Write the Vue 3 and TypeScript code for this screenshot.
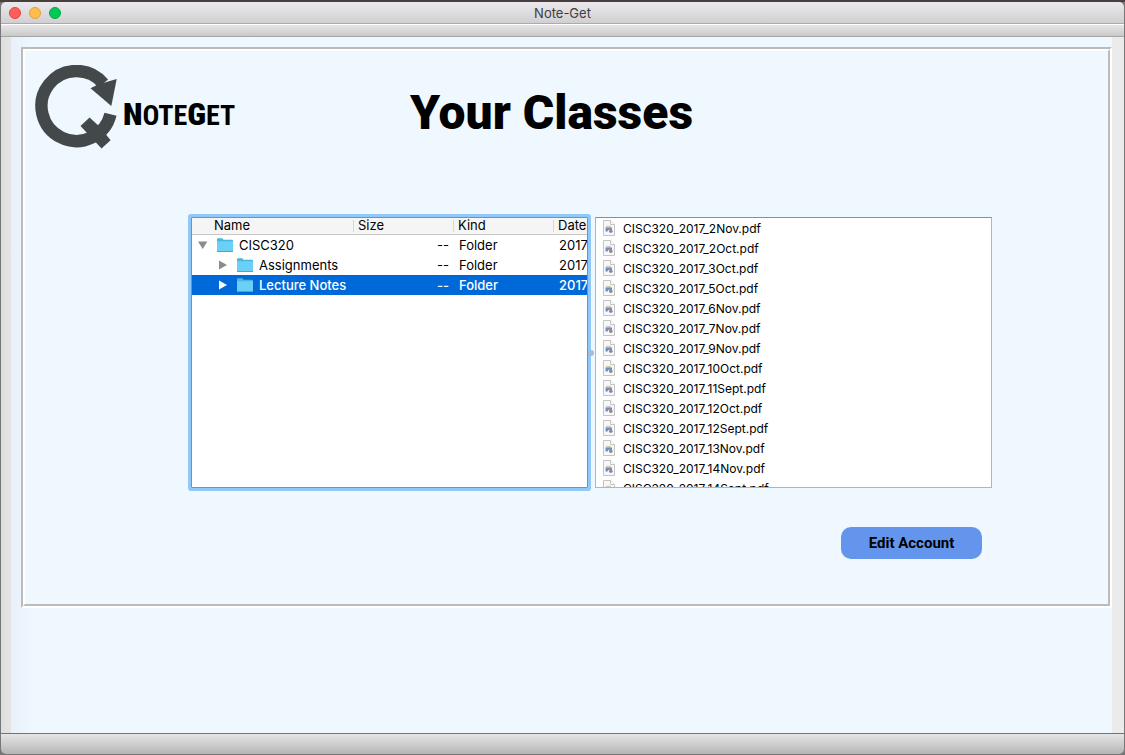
<script setup lang="ts">
import { ref } from 'vue'

interface Folder {
  name: string
  level: number
  open: boolean
  date: string
}

const folders = ref<Folder[]>([
  { name: 'CISC320', level: 0, open: true, date: '2017' },
  { name: 'Assignments', level: 1, open: false, date: '2017' },
  { name: 'Lecture Notes', level: 1, open: false, date: '2017' },
])
const selected = ref('Lecture Notes')

const days = [
  '2Nov', '2Oct', '3Oct', '5Oct', '6Nov', '7Nov', '9Nov', '10Oct',
  '11Sept', '12Oct', '12Sept', '13Nov', '14Nov', '14Sept',
]
const files = days.map((day) => `CISC320_2017_${day}.pdf`)
</script>

<template>
  <div class="window">
    <header class="titlebar">
      <div class="lights">
        <button class="light close" type="button" aria-label="Close"></button>
        <button class="light minimize" type="button" aria-label="Minimize"></button>
        <button class="light zoom" type="button" aria-label="Zoom"></button>
      </div>
      <span class="title">Note-Get</span>
    </header>
    <div class="toolbar"></div>

    <div class="body">
      <main class="page">
        <section class="frame">
          <div class="frame-inner">
            <div class="top">
              <div class="logo">
                <svg class="mark" width="83" height="85" viewBox="0 0 83 85" aria-hidden="true">
                  <path d="M 68.3 18.5 A 35 35 0 1 0 75.5 49.2" fill="none" stroke="#43484a" stroke-width="12.4" />
                  <path d="M 55.5 23.2 L 62 20 L 74 16.3 L 81.7 14 L 76.3 41 Z" fill="#43484a" />
                  <path d="M 45.5 61 L 54.5 52.5 L 65 62 L 75.6 75.3 L 66.5 83.6 Z" fill="#43484a" />
                </svg>
                <span class="wordmark"><b>N</b>OTE<b>G</b>ET</span>
              </div>
              <h1>Your Classes</h1>
            </div>

            <div class="panes">
              <div class="tree">
                <table>
                  <colgroup>
                    <col class="c-name" />
                    <col class="c-size" />
                    <col class="c-kind" />
                    <col />
                  </colgroup>
                  <thead>
                    <tr>
                      <th scope="col">Name</th>
                      <th scope="col">Size</th>
                      <th scope="col">Kind</th>
                      <th scope="col">Date</th>
                    </tr>
                  </thead>
                  <tbody>
                    <tr
                      v-for="f in folders"
                      :key="f.name"
                      :class="{ selected: f.name === selected }"
                      @click="selected = f.name"
                    >
                      <td>
                        <div class="entry" :class="{ nested: f.level > 0 }">
                          <button
                            class="twist"
                            type="button"
                            :aria-label="'Toggle ' + f.name"
                            :aria-expanded="f.open"
                          >
                            <svg width="10" height="10" viewBox="0 0 10 10">
                              <path :d="f.open ? 'M0 1.5H9.4L4.7 9Z' : 'M1 0.5V9.5L9 5Z'" fill="currentColor" />
                            </svg>
                          </button>
                          <svg width="16" height="14" viewBox="0 0 16 14" aria-hidden="true">
                            <path d="M0 1.2Q0 .3 .9 .3H5.2L6.6 1.8H15.1Q16 1.8 16 2.7V13.5H0Z" fill="#45b7e0" />
                            <path d="M0 3.2H16V13H0Z" fill="#6bcff6" />
                            <path d="M0 13H16V14H0Z" fill="#43a9d3" />
                          </svg>
                          <span>{{ f.name }}</span>
                        </div>
                      </td>
                      <td class="size">--</td>
                      <td>Folder</td>
                      <td>{{ f.date }}</td>
                    </tr>
                  </tbody>
                </table>
              </div>

              <span class="grip"></span>

              <ul class="files">
                <li v-for="file in files" :key="file">
                  <svg width="12" height="16" viewBox="0 0 12 16" aria-hidden="true">
                    <path d="M.5 .5H7.5L11.5 4.5V15.5H.5Z" fill="#f8f8f8" stroke="#c4c4c4" />
                    <path d="M7.5 .5V4.5H11.5" fill="#fff" stroke="#c4c4c4" />
                    <path d="M3 5.8H8V7.8H3Z" fill="#dccab2" />
                    <path d="M2.5 7.5H9V10H7L6 9.4L4.5 11.5H2.5Z" fill="#6d8fc8" />
                    <circle cx="7.8" cy="11.2" r="1.8" fill="#8f8a8a" />
                  </svg>
                  <span>{{ file }}</span>
                </li>
              </ul>
            </div>

            <div class="actions">
              <button class="edit" type="button">Edit Account</button>
            </div>
          </div>
        </section>
      </main>
    </div>

    <footer class="bottombar"></footer>
  </div>
</template>

<style>
body {
  background: #777;
}
</style>

<style scoped>
* {
  box-sizing: border-box;
}

.window {
  display: flex;
  flex-direction: column;
  min-height: 100vh;
  padding: 0 1px 1px;
  border-top: 2px solid #4a3f3f;
  background: #777;
  color: #000;
  font-family: Inter, "Liberation Sans", sans-serif;
  font-size: 13px;
}

.titlebar {
  display: grid;
  grid-template-columns: 1fr auto 1fr;
  align-items: center;
  height: 22px;
  border-bottom: 1px solid #acaaac;
  border-radius: 5px 5px 0 0;
  background: linear-gradient(#ebe9eb, #d1cfd1);
}

.lights {
  display: flex;
  gap: 8px;
  padding-left: 8px;
}

.light {
  width: 12px;
  height: 12px;
  padding: 0;
  border: 1px solid;
  border-radius: 50%;
}

.close {
  border-color: #e2443f;
  background: #ff5f5c;
}

.minimize {
  border-color: #dfa03c;
  background: #ffbd4c;
}

.zoom {
  border-color: #00ab46;
  background: #00ca56;
}

.title {
  color: #3e3c3e;
}

.toolbar {
  height: 13px;
  border-top: 1px solid #fff;
  border-bottom: 1px solid #a6a6a6;
  background: linear-gradient(#e6e6e6, #c9c9c9);
}

.body {
  display: flex;
  flex: 1;
  padding: 0 12px 0 10px;
  background: linear-gradient(90deg, #dedede, #ebebeb 20px);
}

.page {
  flex: 1;
  padding: 10px 0 0 10px;
  background: linear-gradient(90deg, #e8f1f9, #eff7ff 24px);
}

.frame {
  border: 2px solid;
  border-color: #bbb #fff #fff #bbb;
}

.frame-inner {
  padding: 14px 0 45px;
  border: 2px solid;
  border-color: #fff #bbb #bbb #fff;
  background: #eff7ff;
}

.top {
  display: flex;
  align-items: flex-start;
  padding: 0 238px 0 10px;
}

.logo {
  display: flex;
  flex: none;
  gap: 5px;
  width: 198px;
}

.mark {
  flex: none;
}

.wordmark {
  padding-top: 19px;
  font-family: "Roboto Condensed", "Open Sans Condensed", "DejaVu Sans Condensed", sans-serif;
  font-size: 28px;
  font-weight: 700;
  line-height: 60px;
  white-space: nowrap;
}

.wordmark b {
  font-size: 32px;
}

h1 {
  flex: 1;
  margin: 0;
  padding-top: 18px;
  font-family: Roboto, sans-serif;
  font-size: 48px;
  font-weight: 900;
  line-height: 60px;
  text-align: center;
  white-space: nowrap;
}

.panes {
  position: relative;
  display: grid;
  grid-template-columns: 1fr 1fr;
  gap: 7px;
  height: 271px;
  margin-top: 67px;
  padding: 0 116px 0 166px;
}

.tree {
  min-width: 0;
  overflow: hidden;
  border: 1px solid #5d97cf;
  border-radius: 1px;
  background: #fff;
  box-shadow: 0 0 0 3px #8fc8f9;
}

table {
  width: 100%;
  table-layout: fixed;
  border-collapse: separate;
  border-spacing: 0;
}

.c-name {
  width: 161px;
}

.c-size,
.c-kind {
  width: 100px;
}

th {
  height: 17px;
  padding: 0 0 1px 5px;
  border-bottom: 1px solid #c8c8c8;
  background: linear-gradient(#d8d8d8, #d8d8d8) 0 2px / 1px 12px no-repeat #f5f5f5;
  font-weight: 400;
  line-height: 15px;
  text-align: left;
}

th:first-child {
  padding-left: 22px;
  background: #f5f5f5;
}

td {
  height: 20px;
  padding: 0 0 0 6px;
  overflow: hidden;
  line-height: 20px;
  white-space: nowrap;
}

td:first-child {
  padding: 0;
}

.size {
  padding: 0 4px 0 0;
  text-align: right;
}

.entry {
  display: flex;
  align-items: center;
  gap: 6px;
  padding-left: 6px;
}

.nested {
  padding-left: 26px;
}

.twist {
  display: flex;
  width: 13px;
  padding: 0;
  border: 0;
  background: none;
  color: #8c8c8c;
}

.selected {
  background: #0069d9;
  color: #fff;
  font-weight: 500;
}

.selected .twist {
  color: #fff;
}

.grip {
  position: absolute;
  top: 133px;
  left: calc(50% + 21px);
  width: 6px;
  height: 6px;
  border-radius: 50%;
  background: #a5bcd4;
}

.files {
  min-width: 0;
  margin: 0;
  padding: 0 0 0 7px;
  overflow: hidden;
  border: 1px solid #b4b4b4;
  border-top-color: #8e8e8e;
  background: #fff;
  font-size: 12px;
  list-style: none;
}

li {
  display: flex;
  align-items: center;
  gap: 8px;
  height: 20px;
}

.actions {
  display: flex;
  justify-content: flex-end;
  padding: 39px 126px 0 0;
}

.edit {
  width: 141px;
  height: 32px;
  padding: 0;
  border: 0;
  border-radius: 10px;
  background: #6495ed;
  color: #000;
  font-family: Roboto, sans-serif;
  font-size: 15px;
  font-weight: 700;
}

.bottombar {
  height: 21px;
  border-top: 1px solid #737373;
  border-radius: 0 0 5px 5px;
  background: linear-gradient(#e6e6e6, #b5b5b5);
}
</style>
